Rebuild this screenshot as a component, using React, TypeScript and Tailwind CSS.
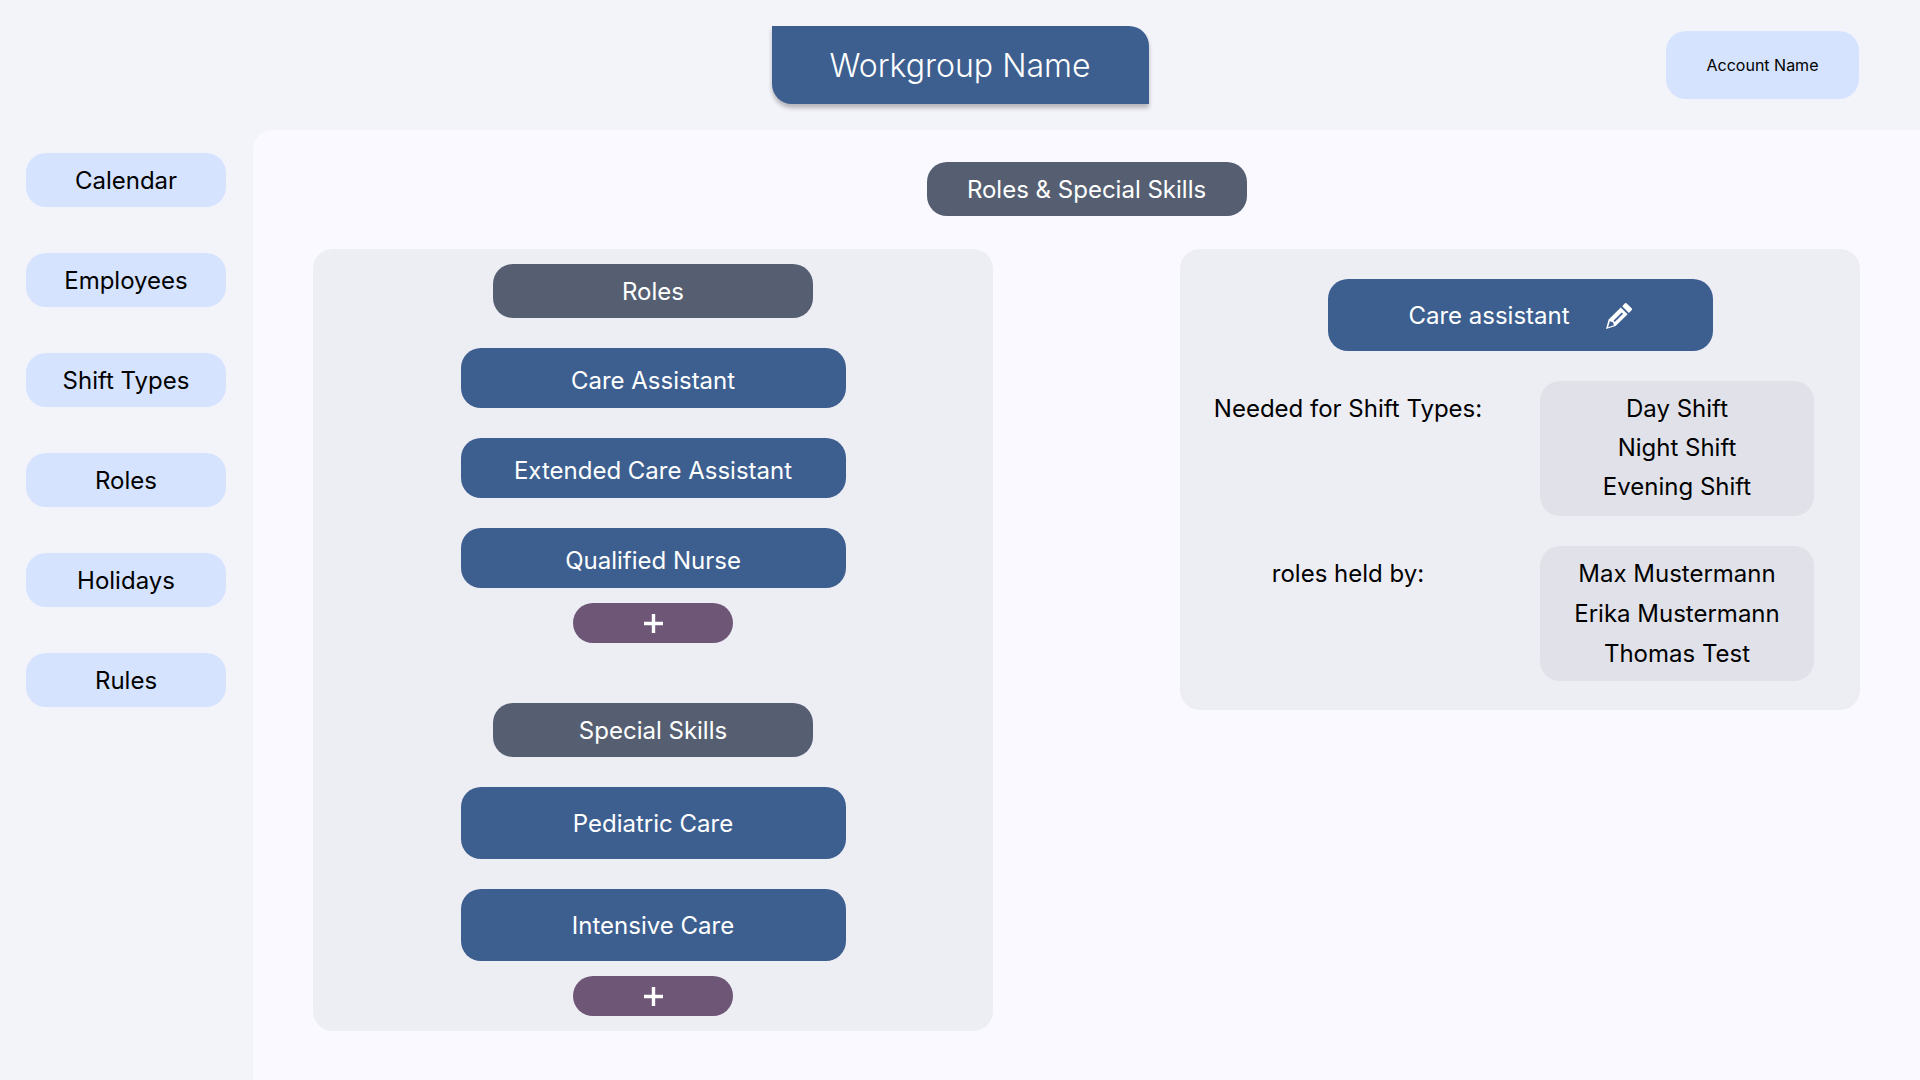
const navItems = ["Calendar", "Employees", "Shift Types", "Roles", "Holidays", "Rules"];
const roles = ["Care Assistant", "Extended Care Assistant", "Qualified Nurse"];
const skills = ["Pediatric Care", "Intensive Care"];
const shiftTypes = ["Day Shift", "Night Shift", "Evening Shift"];
const holders = ["Max Mustermann", "Erika Mustermann", "Thomas Test"];

function PencilIcon() {
  return (
    <svg viewBox="0 0 25 25" className="size-[26px]" fill="currentColor" aria-hidden="true">
      <path d="M15.6 3.2 18 .6Q19 -.4 20 .6L24.6 5Q25.6 6 24.6 7L22 9.6Z" />
      <path
        fillRule="evenodd"
        d="M14.2 4.4 20.8 10.9 9.2 22.2 0 25 2.5 15.8ZM15.2 9.2 7.2 17 8.4 18.2 16.4 10.4ZM3.7 17.6 2 23.2 7.5 21.5 6.8 18.5Z"
      />
    </svg>
  );
}

function PlusIcon() {
  return (
    <svg viewBox="0 0 19 19" className="size-[19px]" fill="currentColor" aria-hidden="true">
      <path d="M7.8 0h3.4v7.8H19v3.4h-7.8V19H7.8v-7.8H0V7.8h7.8Z" />
    </svg>
  );
}

function Heading({ children }: { children: string }) {
  return (
    <h2 className="flex h-[54px] w-80 max-w-full items-center justify-center rounded-[20px] bg-[#555f71] pt-0.5 text-white">
      {children}
    </h2>
  );
}

function AddButton({ label }: { label: string }) {
  return (
    <button
      type="button"
      aria-label={label}
      className="mt-[15px] flex h-10 w-40 items-center justify-center rounded-[20px] bg-[#6e5676] text-white"
    >
      <PlusIcon />
    </button>
  );
}

export default function App() {
  return (
    <div className="flex min-h-screen flex-col bg-[#f3f3fa] font-['Inter',sans-serif] text-2xl text-black [font-optical-sizing:none]">
      <header className="grid h-[130px] grid-cols-[1fr_auto_1fr] items-center">
        <h1 className="col-start-2 flex h-[78px] w-[377px] items-center justify-center rounded-tr-[20px] rounded-bl-[20px] bg-[#3d5f90] pt-0.5 text-[32px] font-[350] text-white shadow-[0_4px_4px_rgba(0,0,0,0.25)]">
          Workgroup Name
        </h1>
        <button
          type="button"
          className="mr-[61px] h-[68px] w-[193px] justify-self-end rounded-[20px] bg-[#d5e3ff] text-base"
        >
          Account Name
        </button>
      </header>

      <div className="flex flex-1">
        <nav className="flex w-[253px] shrink-0 flex-col gap-[46px] px-[26px] pt-[23px]">
          {navItems.map((item) => (
            <a
              key={item}
              href="#"
              className="flex h-[54px] w-[200px] items-center justify-center rounded-[20px] bg-[#d5e3ff] pt-0.5"
            >
              {item}
            </a>
          ))}
        </nav>

        <main className="flex flex-1 flex-col items-center rounded-tl-[20px] bg-[#f9f9ff] px-[60px] pt-8">
          <Heading>Roles & Special Skills</Heading>

          <div className="mt-[33px] grid w-full grid-cols-2 items-start gap-[187px]">
            <div className="flex flex-col items-center rounded-[20px] bg-[#ededf4] py-[15px]">
              <Heading>Roles</Heading>
              <div className="mt-[30px] flex flex-col gap-[30px]">
                {roles.map((role) => (
                  <button
                    key={role}
                    type="button"
                    className="h-[60px] w-[385px] rounded-[20px] bg-[#3d5f90] pt-1.5 text-white"
                  >
                    {role}
                  </button>
                ))}
              </div>
              <AddButton label="Add role" />

              <div className="mt-[60px] flex w-full justify-center">
                <Heading>Special Skills</Heading>
              </div>
              <div className="mt-[30px] flex flex-col gap-[30px]">
                {skills.map((skill) => (
                  <button
                    key={skill}
                    type="button"
                    className="h-[72px] w-[385px] rounded-[20px] bg-[#3d5f90] pt-0.5 text-white"
                  >
                    {skill}
                  </button>
                ))}
              </div>
              <AddButton label="Add special skill" />
            </div>

            <section className="flex flex-col items-center gap-[30px] rounded-[20px] bg-[#ededf4] pt-[30px] pb-[29px]">
              <button
                type="button"
                className="flex h-[72px] w-[385px] items-center justify-center gap-9 rounded-[20px] bg-[#3d5f90] pt-0.5 text-white"
              >
                Care assistant
                <PencilIcon />
              </button>

              <div className="flex w-full pr-[46px] leading-[39px]">
                <h3 className="flex-1 pt-2 pr-6 text-center">Needed for Shift Types:</h3>
                <ul className="h-[135px] w-[274px] rounded-[20px] bg-[#e1e2e9] pt-2 text-center">
                  {shiftTypes.map((shift) => (
                    <li key={shift}>{shift}</li>
                  ))}
                </ul>
              </div>

              <div className="flex w-full pr-[46px] leading-10">
                <h3 className="flex-1 pt-2 pr-6 text-center">roles held by:</h3>
                <ul className="h-[135px] w-[274px] rounded-[20px] bg-[#e1e2e9] pt-2 text-center">
                  {holders.map((name) => (
                    <li key={name}>{name}</li>
                  ))}
                </ul>
              </div>
            </section>
          </div>
        </main>
      </div>
    </div>
  );
}
